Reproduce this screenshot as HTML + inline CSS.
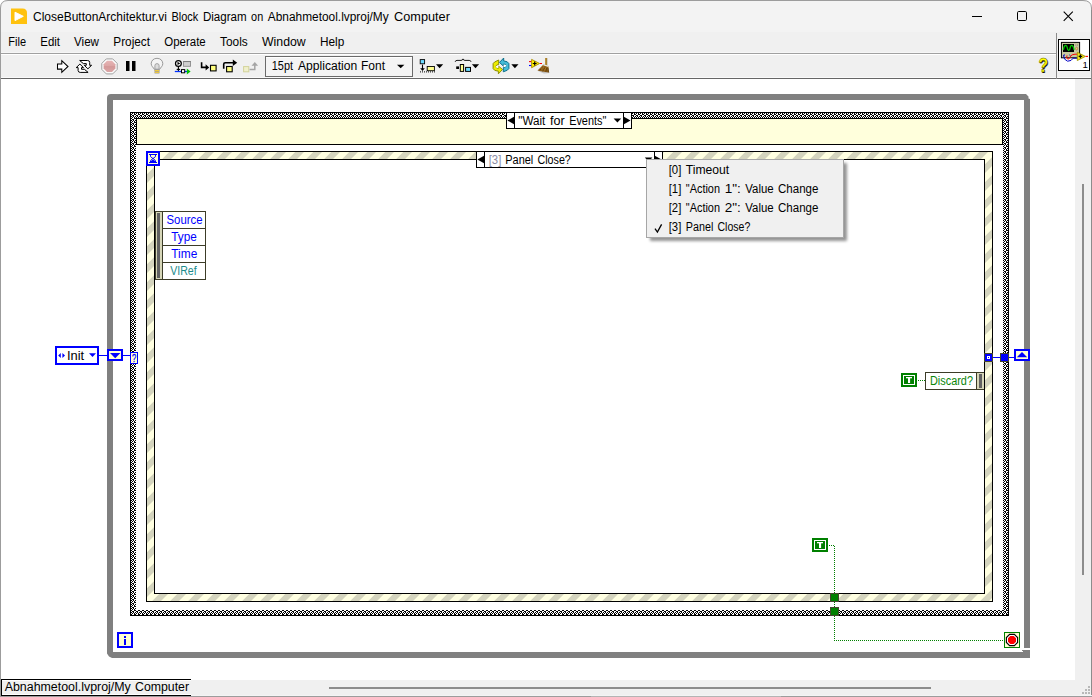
<!DOCTYPE html>
<html lang="en"><head><meta charset="utf-8"><title>CloseButtonArchitektur.vi Block Diagram</title>
<style>
html,body{margin:0;padding:0;background:#fff;}
body{width:1092px;height:697px;overflow:hidden;position:relative;}
svg{position:absolute;left:0;top:0;display:block;font-family:"Liberation Sans", "DejaVu Sans", sans-serif;}
svg text{white-space:pre;}
</style></head>
<body>
<svg width="1092" height="697" viewBox="0 0 1092 697">
<defs>
<pattern id="chk" width="4" height="4" patternUnits="userSpaceOnUse"><rect width="4" height="4" fill="#000"/><rect x="0" y="0" width="1" height="1" fill="#fff"/><rect x="2" y="0" width="1" height="1" fill="#fff"/><rect x="1" y="1" width="1" height="1" fill="#fff"/><rect x="3" y="1" width="1" height="1" fill="#fff"/><rect x="0" y="2" width="1" height="1" fill="#fff"/><rect x="1" y="2" width="1" height="1" fill="#fff"/><rect x="2" y="3" width="1" height="1" fill="#fff"/><rect x="3" y="3" width="1" height="1" fill="#fff"/></pattern>
<linearGradient id="abortg" x1="0" y1="0" x2="0" y2="1">
<stop offset="0" stop-color="#e6b4b4"/><stop offset="0.5" stop-color="#dca4a4"/><stop offset="0.51" stop-color="#d49898"/><stop offset="1" stop-color="#dba6a6"/>
</linearGradient>
<filter id="sh" x="-10%" y="-10%" width="130%" height="130%"><feGaussianBlur stdDeviation="1.6"/></filter>
</defs>
<rect x="0" y="0" width="1092" height="697" fill="#fff" />
<path d="M0 33 V8 Q0 0 8 0 H1083 Q1091 0 1091 8 V33 Z" fill="#f3f3f3"/>
<rect x="0" y="32" width="1092" height="47" fill="#f0f0f0" />
<rect x="0" y="52" width="1056" height="1" fill="#f6f6f6" />
<rect x="0" y="53" width="1056" height="1" fill="#a0a0a0" />
<rect x="0" y="54" width="1056" height="1" fill="#ffffff" />
<rect x="0" y="77" width="1092" height="1" fill="#fafafa" />
<rect x="0" y="78" width="1092" height="1" fill="#666666" />
<rect x="1056" y="33" width="1" height="46" fill="#8a8a8a" />
<rect x="1075" y="79" width="16" height="617" fill="#f0f0f0" />
<rect x="0" y="680" width="1092" height="16" fill="#f0f0f0" />
<rect x="1082" y="184" width="2" height="391" fill="#8c8c8c" />
<rect x="329" y="687" width="602" height="2" fill="#8c8c8c" />
<path d="M0.5 697 V8 Q0.5 0.5 8 0.5 H1083 Q1091.5 0.5 1091.5 8 V697" fill="none" stroke="#9c9c9c" stroke-width="1"/>
<rect x="1091" y="10" width="1" height="687" fill="#8c8c8c" />
<rect x="1088" y="686" width="2" height="2" fill="#b8b8b8" />
<rect x="1085" y="689" width="2" height="2" fill="#b8b8b8" />
<rect x="1088" y="689" width="2" height="2" fill="#b8b8b8" />
<rect x="1082" y="692" width="2" height="2" fill="#b8b8b8" />
<rect x="1085" y="692" width="2" height="2" fill="#b8b8b8" />
<rect x="1088" y="692" width="2" height="2" fill="#b8b8b8" />
<rect x="191" y="695" width="901" height="1" fill="#f4f4f4" />
<rect x="0" y="696" width="1092" height="1" fill="#9c9c9c" />
<rect x="591" y="696" width="190" height="1" fill="#b4b4b4" />
<path d="M11 8.5 H22.5 Q27 8.5 27 13 V24 H11 Z" fill="#ffc20e"/>
<path d="M15 12.2 L23.3 16.3 L15 20.6 Z" fill="#fff" stroke="#fff" stroke-width="1" stroke-linejoin="round"/>
<text y="21" font-size="12" fill="#000" ><tspan x="33" textLength="134" lengthAdjust="spacingAndGlyphs">CloseButtonArchitektur.vi</tspan> <tspan x="171.4" textLength="26.8" lengthAdjust="spacingAndGlyphs">Block</tspan> <tspan x="202.9" textLength="43.7" lengthAdjust="spacingAndGlyphs">Diagram</tspan> <tspan x="251.1" textLength="12.1" lengthAdjust="spacingAndGlyphs">on</tspan> <tspan x="267.8" textLength="120.9" lengthAdjust="spacingAndGlyphs">Abnahmetool.lvproj/My</tspan> <tspan x="394.1" textLength="55.8" lengthAdjust="spacingAndGlyphs">Computer</tspan></text>
<g shape-rendering="crispEdges" fill="none" stroke="#000" stroke-width="1">
<path d="M972 16.5 H982"/>
</g>
<rect x="1017.5" y="11.5" width="9" height="9" rx="1.2" fill="none" stroke="#000" stroke-width="1"/>
<path d="M1063.7 11.7 L1072.8 20.8 M1072.8 11.7 L1063.7 20.8" fill="none" stroke="#000" stroke-width="1.1"/>
<text x="8.3" y="46" font-size="12" fill="#000" text-anchor="start" textLength="17.7" lengthAdjust="spacingAndGlyphs" >File</text>
<text x="40.3" y="46" font-size="12" fill="#000" text-anchor="start" textLength="19.7" lengthAdjust="spacingAndGlyphs" >Edit</text>
<text x="74" y="46" font-size="12" fill="#000" text-anchor="start" textLength="25" lengthAdjust="spacingAndGlyphs" >View</text>
<text x="113.3" y="46" font-size="12" fill="#000" text-anchor="start" textLength="36.7" lengthAdjust="spacingAndGlyphs" >Project</text>
<text x="164.3" y="46" font-size="12" fill="#000" text-anchor="start" textLength="41.4" lengthAdjust="spacingAndGlyphs" >Operate</text>
<text x="220" y="46" font-size="12" fill="#000" text-anchor="start" textLength="27.7" lengthAdjust="spacingAndGlyphs" >Tools</text>
<text x="262" y="46" font-size="12" fill="#000" text-anchor="start" textLength="43.7" lengthAdjust="spacingAndGlyphs" >Window</text>
<text x="320" y="46" font-size="12" fill="#000" text-anchor="start" textLength="24.3" lengthAdjust="spacingAndGlyphs" >Help</text>
<g id="toolbar">
<!-- run arrow -->
<path d="M57.5 63.9 H61.8 V60.6 L68 66.5 L61.8 72.4 V69.1 H57.5 Z" fill="#fff" stroke="#000" stroke-width="1.05" stroke-linejoin="miter"/>
<!-- run continuously -->
<g fill="#fff" stroke="#000" stroke-width="1" stroke-linejoin="miter">
<path d="M79.7 60.5 H87.6 Q89.7 60.6 89.7 62.4 V65.3 H91.6 L87.9 68.8 L84.3 65.3 H86.3 V63.6 H83.4 Z"/>
<path d="M88.1 72.4 H80.2 Q78.1 72.3 78.1 70.5 V67.6 H76.2 L79.9 64.1 L83.5 67.6 H81.5 V69.3 H84.4 Z"/>
</g>
<!-- abort -->
<path d="M106.3 58.9 H112.7 L117.2 63.4 V69.4 L112.7 73.9 H106.3 L101.8 69.4 V63.4 Z" fill="#fbfbfb" stroke="#969696" stroke-width="0.9"/>
<path d="M107 60.8 H112 L115.4 64.2 V68.6 L112 72 H107 L103.6 68.6 V64.2 Z" fill="url(#abortg)"/>
<!-- pause -->
<rect x="126" y="61" width="3.5" height="10" fill="#000"/>
<rect x="132" y="61" width="3.5" height="10" fill="#000"/>
<!-- bulb -->
<g>
<path d="M157 58.3 C153.3 58.3 151.2 60.9 151.2 63.7 C151.2 66.2 153.4 67.4 154.4 69.4 H159.6 C160.6 67.4 162.8 66.2 162.8 63.7 C162.8 60.9 160.7 58.3 157 58.3 Z" fill="#f4f4f4" stroke="#8e8e8e" stroke-width="0.9"/>
<path d="M154.9 69.2 V65.6 Q154.9 63.6 157 63.6 Q159.1 63.6 159.1 65.6 V69.2 Z" fill="#dcdcdc" stroke="#9c9c9c" stroke-width="0.9"/>
<rect x="154.5" y="69.5" width="5" height="4.1" rx="0.7" fill="#9a9a9a"/>
<rect x="154.8" y="70" width="4.4" height="1.2" fill="#f2ca3c"/>
<rect x="154.8" y="71.8" width="4.4" height="1.1" fill="#f2ca3c"/>
</g>
<!-- retain wire values -->
<g>
<circle cx="178.4" cy="63.4" r="2.9" fill="#fff" stroke="#000" stroke-width="1.25"/>
<path d="M177.5 61.7 L180.2 63.4 L177.5 65.1 Z" fill="#000"/>
<rect x="183.5" y="61.6" width="7" height="4.7" fill="#d0d0d0" stroke="#8c8c8c" stroke-width="0.9"/>
<path d="M183.2 61.5 H190.8" stroke="#7c7c7c" stroke-width="0.9"/>
<path d="M178.4 66.4 V71" stroke="#000" stroke-width="1.1"/>
<path d="M176.7 69.4 H180.1" stroke="#000" stroke-width="1.1"/>
<path d="M174.8 71.5 H187" stroke="#0030ff" stroke-width="1.3"/>
<rect x="181.5" y="69.6" width="3.2" height="3.2" fill="#fff" stroke="#000" stroke-width="1"/>
<path d="M186.8 68.6 L190.6 71.5 L186.8 74.4 Z" fill="#00c000"/>
</g>
<!-- step into -->
<g>
<path d="M201.6 62.2 V67.4 H207" fill="none" stroke="#000" stroke-width="1.6"/>
<path d="M205.6 64.3 L209.2 67.4 L205.6 70.6 Z" fill="#000"/>
<rect x="210.5" y="65.3" width="5.6" height="5.6" fill="#ffff80" stroke="#000" stroke-width="1.1"/>
</g>
<!-- step over -->
<g>
<path d="M223.7 68.8 V64.3 Q223.7 62.8 225.3 62.8 H233.5" fill="none" stroke="#000" stroke-width="1.6"/>
<path d="M232.8 59.6 L237.2 62.8 L232.8 66 Z" fill="#000"/>
<rect x="226.6" y="66.5" width="5.6" height="5.3" fill="#ffff80" stroke="#000" stroke-width="1.1"/>
</g>
<!-- step out (disabled) -->
<g>
<rect x="243.6" y="66.6" width="5.2" height="5.2" fill="#f0f0cc" stroke="#d2d29a" stroke-width="1"/>
<path d="M249.6 69.4 H254.8 V65" fill="none" stroke="#a4a4a4" stroke-width="1.5"/>
<path d="M251.5 65.8 L254.8 62 L258.1 65.8 Z" fill="#a4a4a4"/>
</g>
<!-- font ring -->
<rect x="265.5" y="56.5" width="147" height="20" fill="#f4f4f4" stroke="#6a6a6a" stroke-width="1"/>
<rect x="266" y="57" width="146" height="1" fill="#fff"/>
<text y="70.3" font-size="12" fill="#000" ><tspan x="271.8" textLength="21.2" lengthAdjust="spacingAndGlyphs">15pt</tspan> <tspan x="298" textLength="59.3" lengthAdjust="spacingAndGlyphs">Application</tspan> <tspan x="361" textLength="24" lengthAdjust="spacingAndGlyphs">Font</tspan></text>
<path d="M397 64.8 H404.4 L400.7 68.3 Z" fill="#000"/>
<!-- align objects -->
<g>
<rect x="420.2" y="59.6" width="4.4" height="4.2" fill="#6edcff" stroke="#000" stroke-width="0.9"/>
<path d="M422.5 64.6 V70" stroke="#000" stroke-width="1.1"/>
<path d="M420.2 68.3 L422.5 71 L424.8 68.3 Z" fill="#000"/>
<rect x="427.2" y="66.5" width="7.2" height="4.2" fill="#ffff90" stroke="#000" stroke-width="0.9"/>
<path d="M420 71.9 H435" stroke="#000" stroke-width="1" stroke-dasharray="1 1"/>
<path d="M436 64.3 H443.2 L439.6 68.3 Z" fill="#000"/>
</g>
<!-- distribute objects -->
<g>
<path d="M455.2 61.8 Q455.4 60.4 457 60.4 H461 Q462.7 60.4 463 58.9 Q463.3 60.4 465 60.4 H469.2 Q470.8 60.4 471 61.8" fill="none" stroke="#000" stroke-width="0.9"/>
<rect x="456.2" y="66.4" width="2.8" height="2.6" fill="#000"/>
<rect x="460.3" y="64.5" width="3.3" height="6.9" fill="#ffff90" stroke="#000" stroke-width="1"/>
<rect x="465.6" y="67.4" width="4.9" height="4" fill="#6edcff" stroke="#000" stroke-width="1"/>
<path d="M471.9 64.3 H479.1 L475.5 68.3 Z" fill="#000"/>
</g>
<!-- reorder -->
<g stroke-linejoin="round">
<path d="M498.7 60 L494.6 62 L493.1 63.6 V68.6 L494.8 70.4 L498.4 71.2 V73.8 L502.5 69.5 L498.4 66 V68.3 L496.6 67.8 L495.9 66.6 L496.6 65.2 L498.7 64.4 Z" fill="#ecec00" stroke="#8e8e00" stroke-width="1"/>
<path d="M498.4 65.4 L496.4 66 L495.6 66.8 L496.6 67.8 L498.4 68 Z" fill="#fff"/>
<path d="M503.3 71.8 L507.2 70.3 L508.9 68.6 V63.6 L507.2 61.8 L503.7 60.9 V58 L499.5 62.4 L503.7 66.4 V64 L505.4 64.4 L506.2 65.6 L505.4 67 L503.3 67.6 Z" fill="#44bcd8" stroke="#0c6e8a" stroke-width="1"/>
<path d="M503.6 64.4 L505.6 65 L506.6 65.8 L505.4 66.8 L503.6 67.2 Z" fill="#fff"/>
<path d="M511.3 64.3 H518.5 L514.9 68.3 Z" fill="#000" stroke="none"/>
</g>
<!-- clean up diagram -->
<g>
<path d="M537.5 70.8 L543 66 L548 69 L549.6 73 L544 73.6 Z" fill="#9a9a9a" opacity="0.55"/>
<path d="M529 61.6 H531.6" stroke="#ff0000" stroke-width="1.1"/>
<path d="M529 65.5 H531.6" stroke="#0000ff" stroke-width="1.1"/>
<path d="M531.6 59.4 L539.6 63.5 L531.6 67.7 Z" fill="#fff000" stroke="#a88a00" stroke-width="0.9" stroke-linejoin="round"/>
<path d="M532.8 63.5 H536.6 M534.7 61.6 V65.4" stroke="#000" stroke-width="1.2"/>
<path d="M540 63.5 H542" stroke="#ff0000" stroke-width="1.1"/>
<path d="M546 58 V65" stroke="#b08420" stroke-width="1.7"/>
<path d="M546.9 58 V65" stroke="#7a5410" stroke-width="0.5"/>
<path d="M543.4 64.4 L548.4 66 L549 72.6 L543.6 71.8 L537.6 70.6 Z" fill="#8e5e18"/>
<path d="M543.2 64.8 L548.4 66.4" stroke="#e8e8e0" stroke-width="1.1"/>
<path d="M539.6 70.4 L543 67.2 M542.6 71.4 L545 67.6 M545.8 72 L546.8 67.8 M548.4 72.2 L548 68" stroke="#4e3208" stroke-width="0.6"/>
<path d="M541 69.2 L544 66.6 M544.4 70.4 L546 67.4" stroke="#c89038" stroke-width="0.5"/>
</g>
<!-- help -->
<g>
<text x="1039.6" y="73.2" font-size="19.6" font-weight="bold" fill="#8e8e8e" textLength="9.6" lengthAdjust="spacingAndGlyphs">?</text>
<text x="1039" y="72.6" font-size="19.6" font-weight="bold" fill="#000" textLength="9.6" lengthAdjust="spacingAndGlyphs">?</text>
<text x="1038.4" y="72.1" font-size="19.6" font-weight="bold" fill="#ffff00" stroke="#5a5a00" stroke-width="0.5" textLength="9.6" lengthAdjust="spacingAndGlyphs">?</text>
</g>
<!-- VI icon -->
<g>
<rect x="1058.5" y="39.5" width="31" height="31" fill="#fff" stroke="#000" stroke-width="1"/>
<rect x="1061.4" y="42.4" width="18.2" height="15.4" fill="#c8c8a0" stroke="#000" stroke-width="1"/>
<rect x="1063" y="44" width="11" height="8" fill="#000"/>
<path d="M1063.3 49.8 C1064.3 44.3 1066.6 44.3 1067.3 47.8 C1067.9 51.4 1069.5 51.4 1070.1 47.8 C1070.8 44.3 1073.1 44.3 1074.1 49.8" fill="none" stroke="#00c800" stroke-width="1.3"/>
<ellipse cx="1076.6" cy="48.6" rx="1" ry="1.5" fill="#ffc878" stroke="#786432" stroke-width="0.5"/>
<path d="M1075.8 44 V46 M1077.6 44 V46" stroke="#8c8c6e" stroke-width="0.6"/>
<path d="M1063.4 55.2 Q1063.6 60 1067.6 61.2 Q1071.6 61.2 1073.2 58.2 H1079" fill="none" stroke="#0000c8" stroke-width="1"/>
<path d="M1067 55.4 Q1065.6 58.6 1068 59.2 Q1069.8 58.8 1070.6 56.2 Q1071.6 54.4 1075 54.2 H1078" fill="none" stroke="#ff0000" stroke-width="1"/>
<path d="M1064.3 54 V56 M1069.5 54.5 L1070.3 56" stroke="#0000c8" stroke-width="0.7"/>
<path d="M1077.3 52.3 L1085.4 56.4 L1077.3 60.5 Z" fill="#f6ec1e" stroke="#a09400" stroke-width="0.9" stroke-linejoin="round"/>
<path d="M1078.6 56.4 H1082.2 M1080.4 54.6 V58.2" stroke="#000" stroke-width="1.3"/>
<path d="M1085.6 56.4 H1088" stroke="#ff0000" stroke-width="1.1"/>
<text x="1082.4" y="67.8" font-size="9.6" fill="#000">1</text>
</g>
</g>

<g id="diagram">
<!-- while loop -->
<g fill="#808080">
<path d="M107 98 Q107 94 111 94 H1026 L1028.5 96.4 V98.6 L1030 99 V648 H1024 V100 H113 V652 H1030 V658 H112 L109 656.6 L107 653.6 Z"/>
<rect x="1023" y="650" width="7" height="3"/>
<rect x="1022" y="650" width="1" height="1"/>
</g>

<!-- case structure -->
<rect x="130" y="112" width="879" height="504" fill="#000"/>
<rect x="131" y="113" width="877" height="502" fill="url(#chk)" shape-rendering="crispEdges"/>
<rect x="136" y="118" width="867" height="492" fill="#fff"/>
<rect x="136" y="118" width="867" height="27" fill="#000"/>
<rect x="137" y="119" width="865" height="25" fill="#ffffdc"/>

<!-- event structure -->
<rect x="146" y="151" width="847" height="451" fill="#000"/>
<rect x="147" y="152" width="845" height="449" fill="#000"/>
<clipPath id="evframe"><path clip-rule="evenodd" d="M147 152 H992 V601 H147 Z M154 159 V594 H985 V159 Z"/></clipPath><rect x="147" y="152" width="845" height="449" fill="#ffffe1" clip-path="url(#evframe)"/><path clip-path="url(#evframe)" fill="#d4d4be" d="M152.2 151 L161.0 151 L-290.0 602 L-298.8 602 Z M170.2 151 L179.0 151 L-272.0 602 L-280.8 602 Z M188.2 151 L197.0 151 L-254.0 602 L-262.8 602 Z M206.2 151 L215.0 151 L-236.0 602 L-244.8 602 Z M224.2 151 L233.0 151 L-218.0 602 L-226.8 602 Z M242.2 151 L251.0 151 L-200.0 602 L-208.8 602 Z M260.2 151 L269.0 151 L-182.0 602 L-190.8 602 Z M278.2 151 L287.0 151 L-164.0 602 L-172.8 602 Z M296.2 151 L305.0 151 L-146.0 602 L-154.8 602 Z M314.2 151 L323.0 151 L-128.0 602 L-136.8 602 Z M332.2 151 L341.0 151 L-110.0 602 L-118.8 602 Z M350.2 151 L359.0 151 L-92.0 602 L-100.8 602 Z M368.2 151 L377.0 151 L-74.0 602 L-82.8 602 Z M386.2 151 L395.0 151 L-56.0 602 L-64.8 602 Z M404.2 151 L413.0 151 L-38.0 602 L-46.8 602 Z M422.2 151 L431.0 151 L-20.0 602 L-28.8 602 Z M440.2 151 L449.0 151 L-2.0 602 L-10.8 602 Z M458.2 151 L467.0 151 L16.0 602 L7.2 602 Z M476.2 151 L485.0 151 L34.0 602 L25.2 602 Z M494.2 151 L503.0 151 L52.0 602 L43.2 602 Z M512.2 151 L521.0 151 L70.0 602 L61.2 602 Z M530.2 151 L539.0 151 L88.0 602 L79.2 602 Z M548.2 151 L557.0 151 L106.0 602 L97.2 602 Z M566.2 151 L575.0 151 L124.0 602 L115.2 602 Z M584.2 151 L593.0 151 L142.0 602 L133.2 602 Z M602.2 151 L611.0 151 L160.0 602 L151.2 602 Z M620.2 151 L629.0 151 L178.0 602 L169.2 602 Z M638.2 151 L647.0 151 L196.0 602 L187.2 602 Z M656.2 151 L665.0 151 L214.0 602 L205.2 602 Z M674.2 151 L683.0 151 L232.0 602 L223.2 602 Z M692.2 151 L701.0 151 L250.0 602 L241.2 602 Z M710.2 151 L719.0 151 L268.0 602 L259.2 602 Z M728.2 151 L737.0 151 L286.0 602 L277.2 602 Z M746.2 151 L755.0 151 L304.0 602 L295.2 602 Z M764.2 151 L773.0 151 L322.0 602 L313.2 602 Z M782.2 151 L791.0 151 L340.0 602 L331.2 602 Z M800.2 151 L809.0 151 L358.0 602 L349.2 602 Z M818.2 151 L827.0 151 L376.0 602 L367.2 602 Z M836.2 151 L845.0 151 L394.0 602 L385.2 602 Z M854.2 151 L863.0 151 L412.0 602 L403.2 602 Z M872.2 151 L881.0 151 L430.0 602 L421.2 602 Z M890.2 151 L899.0 151 L448.0 602 L439.2 602 Z M908.2 151 L917.0 151 L466.0 602 L457.2 602 Z M926.2 151 L935.0 151 L484.0 602 L475.2 602 Z M944.2 151 L953.0 151 L502.0 602 L493.2 602 Z M962.2 151 L971.0 151 L520.0 602 L511.2 602 Z M980.2 151 L989.0 151 L538.0 602 L529.2 602 Z M998.2 151 L1007.0 151 L556.0 602 L547.2 602 Z M1016.2 151 L1025.0 151 L574.0 602 L565.2 602 Z M1034.2 151 L1043.0 151 L592.0 602 L583.2 602 Z M1052.2 151 L1061.0 151 L610.0 602 L601.2 602 Z M1070.2 151 L1079.0 151 L628.0 602 L619.2 602 Z M1088.2 151 L1097.0 151 L646.0 602 L637.2 602 Z M1106.2 151 L1115.0 151 L664.0 602 L655.2 602 Z M1124.2 151 L1133.0 151 L682.0 602 L673.2 602 Z M1142.2 151 L1151.0 151 L700.0 602 L691.2 602 Z M1160.2 151 L1169.0 151 L718.0 602 L709.2 602 Z M1178.2 151 L1187.0 151 L736.0 602 L727.2 602 Z M1196.2 151 L1205.0 151 L754.0 602 L745.2 602 Z M1214.2 151 L1223.0 151 L772.0 602 L763.2 602 Z M1232.2 151 L1241.0 151 L790.0 602 L781.2 602 Z M1250.2 151 L1259.0 151 L808.0 602 L799.2 602 Z M1268.2 151 L1277.0 151 L826.0 602 L817.2 602 Z M1286.2 151 L1295.0 151 L844.0 602 L835.2 602 Z M1304.2 151 L1313.0 151 L862.0 602 L853.2 602 Z M1322.2 151 L1331.0 151 L880.0 602 L871.2 602 Z M1340.2 151 L1349.0 151 L898.0 602 L889.2 602 Z M1358.2 151 L1367.0 151 L916.0 602 L907.2 602 Z M1376.2 151 L1385.0 151 L934.0 602 L925.2 602 Z M1394.2 151 L1403.0 151 L952.0 602 L943.2 602 Z M1412.2 151 L1421.0 151 L970.0 602 L961.2 602 Z M1430.2 151 L1439.0 151 L988.0 602 L979.2 602 Z"/>
<rect x="155" y="160" width="829" height="433" fill="#fff"/>

<!-- timeout terminal -->
<rect x="146" y="151" width="14" height="15" fill="#0000ff"/>
<rect x="148" y="153" width="10" height="11" fill="#ffffd2"/>
<g fill="none" stroke="#0000ff" stroke-width="1">
<path d="M149 154.5 H157 M149 162.5 H157"/>
<path d="M150.5 155 V156.6 L153 158.6 L155.5 156.6 V155"/>
<path d="M150.5 162 V160.6 L153 158.4 L155.5 160.6 V162"/>
</g>
<path d="M151 162 V161 L153 159.6 L155 161 V162 Z" fill="#0000ff"/>

<!-- case selector label -->
<rect x="506" y="112" width="126" height="17" fill="#000"/>
<rect x="507" y="113" width="124" height="15" fill="#fff"/>
<rect x="514" y="113" width="1" height="15" fill="#000"/>
<rect x="623" y="113" width="1" height="15" fill="#000"/>
<path d="M507.4 120.5 L514 116.7 V124.3 Z" fill="#000"/>
<path d="M630.5 120.5 L623.9 116.7 V124.3 Z" fill="#000"/>
<path d="M613.6 118.4 H621.2 L617.4 122.4 Z" fill="#000"/>
<text y="124.7" font-size="12" fill="#000" ><tspan x="518.3" textLength="27.0" lengthAdjust="spacingAndGlyphs">"Wait</tspan> <tspan x="550" textLength="14.7" lengthAdjust="spacingAndGlyphs">for</tspan> <tspan x="569.2" textLength="37.1" lengthAdjust="spacingAndGlyphs">Events"</tspan></text>

<!-- event selector label -->
<rect x="476" y="151" width="187" height="17" fill="#000"/>
<rect x="477" y="152" width="185" height="15" fill="#fff"/>
<rect x="484" y="152" width="1" height="15" fill="#000"/>
<rect x="654" y="152" width="1" height="15" fill="#000"/>
<path d="M477.4 159.5 L484 155.7 V163.3 Z" fill="#000"/>
<path d="M661.5 159.5 L654.9 155.7 V163.3 Z" fill="#000"/>
<path d="M644.8 157.4 H652.4 L648.6 161.4 Z" fill="#000"/>
<text y="163.7" font-size="12" fill="#000" ><tspan x="488.7" textLength="12.6" lengthAdjust="spacingAndGlyphs" fill="#8c8ca4">[3]</tspan> <tspan x="505.3" textLength="28.0" lengthAdjust="spacingAndGlyphs">Panel</tspan> <tspan x="537.5" textLength="33.3" lengthAdjust="spacingAndGlyphs">Close?</tspan></text>

<!-- event data node -->
<rect x="155" y="211" width="51" height="69" fill="#3c3c28"/>
<rect x="156" y="212" width="6" height="67" fill="#d6d6b8"/>
<rect x="157" y="213" width="3" height="65" fill="#626262"/>
<rect x="163" y="212" width="42" height="16" fill="#fff"/>
<rect x="163" y="229" width="42" height="16" fill="#fff"/>
<rect x="163" y="246" width="42" height="16" fill="#fff"/>
<rect x="163" y="263" width="42" height="16" fill="#fff"/>
<text x="166.5" y="224.2" font-size="12" fill="#0000ff" textLength="36" lengthAdjust="spacingAndGlyphs">Source</text>
<text x="171.3" y="241.2" font-size="12" fill="#0000ff" textLength="25.5" lengthAdjust="spacingAndGlyphs">Type</text>
<text x="171.3" y="258.2" font-size="12" fill="#0000ff" textLength="26" lengthAdjust="spacingAndGlyphs">Time</text>
<text x="170.2" y="275.2" font-size="12" fill="#1c8c8c" textLength="26.5" lengthAdjust="spacingAndGlyphs">VIRef</text>

<!-- Init enum constant -->
<rect x="55" y="346" width="44" height="19" fill="#0000ff"/>
<rect x="57" y="348" width="40" height="15" fill="#fff"/>
<path d="M58.2 355.5 L60.8 353 V358 Z M65 355.5 L62.4 353 V358 Z" fill="#0000ff"/>
<text x="67" y="359.7" font-size="12" fill="#000" textLength="17.2" lengthAdjust="spacingAndGlyphs">Init</text>
<path d="M89 353.2 H96 L92.5 357 Z" fill="#0000ff"/>
<!-- wires left -->
<rect x="99" y="355" width="8" height="1" fill="#0000ff"/>
<rect x="123" y="355" width="7" height="1" fill="#0000ff"/>
<!-- left shift register -->
<rect x="107" y="349" width="16" height="12" fill="#0000ff"/>
<rect x="109" y="351" width="12" height="8" fill="#ffffd2"/>
<path d="M110 353 H120.4 L115.2 358.3 Z" fill="#0000ff"/>
<!-- case selector terminal -->
<rect x="130" y="352" width="8" height="12" fill="#0000ff"/>
<rect x="131" y="353" width="6" height="10" fill="#ffffd2"/>
<text x="131.9" y="362.1" font-size="10.6" fill="#0000ff" stroke="#0000ff" stroke-width="0.3" textLength="4.2" lengthAdjust="spacingAndGlyphs">?</text>

<!-- right side: tunnels + shift register -->
<rect x="993" y="357" width="7" height="1" fill="#0000ff"/>
<rect x="1009" y="357" width="5" height="1" fill="#0000ff"/>
<rect x="984" y="353" width="9" height="9" fill="#46462e"/>
<rect x="985" y="354" width="7" height="7" fill="#0000ff"/>
<rect x="987" y="356" width="3" height="3" fill="#fff"/>
<rect x="988" y="357" width="1" height="1" fill="#0000ff"/>
<rect x="1000" y="353" width="9" height="9" fill="#46462e"/>
<rect x="1001" y="354" width="7" height="7" fill="#0000ff"/>
<rect x="1014" y="349" width="16" height="12" fill="#0000ff"/>
<rect x="1016" y="351" width="12" height="8" fill="#ffffd2"/>
<path d="M1016.8 357.2 H1027.2 L1022 351.9 Z" fill="#0000ff"/>

<!-- True constant + Discard? -->
<rect x="901" y="373" width="16" height="14" fill="#008000"/>
<rect x="903" y="375" width="12" height="10" fill="#fff"/>
<rect x="904" y="376" width="10" height="8" fill="#008000"/>
<rect x="906" y="377" width="6" height="1.3" fill="#fff"/><rect x="908" y="377" width="2.1" height="6" fill="#fff"/>
<path d="M918 380.5 H925" stroke="#008000" stroke-width="1" stroke-dasharray="1 1" shape-rendering="crispEdges"/>
<rect x="925" y="372" width="59" height="18" fill="#3c3c28"/>
<rect x="926" y="373" width="50" height="16" fill="#fff"/>
<rect x="977" y="373" width="7" height="16" fill="#d6d6b8"/>
<rect x="979" y="374" width="3" height="14" fill="#626262"/>
<text x="930" y="384.8" font-size="12" fill="#0a860a" textLength="43" lengthAdjust="spacingAndGlyphs">Discard?</text>

<!-- bottom True constant and wire -->
<rect x="812" y="538" width="16" height="14" fill="#008000"/>
<rect x="814" y="540" width="12" height="10" fill="#fff"/>
<rect x="815" y="541" width="10" height="8" fill="#008000"/>
<rect x="817" y="542" width="6" height="1.3" fill="#fff"/><rect x="819" y="542" width="2.1" height="6" fill="#fff"/>
<g shape-rendering="crispEdges" stroke="#008000" stroke-width="1" fill="none" stroke-dasharray="1 1">
<path d="M829 545.5 H834"/>
<path d="M834.5 546 V593"/>
<path d="M834.5 602 V607"/>
<path d="M834.5 616 V640"/>
<path d="M834 640.5 H1004"/>
</g>
<rect x="830" y="593" width="9" height="9" fill="#46462e"/>
<rect x="831" y="594" width="7" height="7" fill="#008000"/>
<rect x="830" y="607" width="9" height="9" fill="#46462e"/>
<rect x="831" y="608" width="7" height="7" fill="#008000"/>

<!-- loop condition terminal -->
<rect x="1004" y="632" width="16" height="16" fill="#008000"/>
<rect x="1005" y="633" width="14" height="14" fill="#ffffd2"/>
<path d="M1009.6 634.4 H1014.4 L1017.6 637.6 V642.4 L1014.4 645.6 H1009.6 L1006.4 642.4 V637.6 Z" fill="#fff" stroke="#000" stroke-width="1.15"/>
<path d="M1010.3 636 H1013.7 L1016 638.3 V641.7 L1013.7 644 H1010.3 L1008 641.7 V638.3 Z" fill="#ff0000"/>

<!-- iteration terminal -->
<rect x="117" y="632" width="16" height="16" fill="#0000ff"/>
<rect x="119" y="634" width="12" height="12" fill="#ffffd2"/>
<rect x="124" y="636" width="2" height="2" fill="#0000ff"/>
<rect x="124" y="639" width="2" height="6" fill="#0000ff"/>

<!-- popup menu -->
<rect x="650" y="163" width="197" height="78" rx="1" fill="#000" opacity="0.42" filter="url(#sh)"/>
<rect x="646" y="159" width="198" height="79" fill="#a6a6a6"/>
<rect x="647" y="160" width="196" height="77" fill="#f0f0f0"/>
<text y="173.8" font-size="12" fill="#000" ><tspan x="668.7" textLength="12.6" lengthAdjust="spacingAndGlyphs">[0]</tspan> <tspan x="685.8" textLength="43.4" lengthAdjust="spacingAndGlyphs">Timeout</tspan></text>
<text y="192.8" font-size="12" fill="#000" ><tspan x="668.7" textLength="12.6" lengthAdjust="spacingAndGlyphs">[1]</tspan> <tspan x="685.8" textLength="34.2" lengthAdjust="spacingAndGlyphs">"Action</tspan> <tspan x="724.7" textLength="16.1" lengthAdjust="spacingAndGlyphs">1":</tspan> <tspan x="745.3" textLength="28.4" lengthAdjust="spacingAndGlyphs">Value</tspan> <tspan x="778" textLength="40.4" lengthAdjust="spacingAndGlyphs">Change</tspan></text>
<text y="211.8" font-size="12" fill="#000" ><tspan x="668.7" textLength="12.6" lengthAdjust="spacingAndGlyphs">[2]</tspan> <tspan x="685.8" textLength="34.2" lengthAdjust="spacingAndGlyphs">"Action</tspan> <tspan x="724.7" textLength="16.1" lengthAdjust="spacingAndGlyphs">2":</tspan> <tspan x="745.3" textLength="28.4" lengthAdjust="spacingAndGlyphs">Value</tspan> <tspan x="778" textLength="40.4" lengthAdjust="spacingAndGlyphs">Change</tspan></text>
<text y="230.8" font-size="12" fill="#000" ><tspan x="668.7" textLength="12.6" lengthAdjust="spacingAndGlyphs">[3]</tspan> <tspan x="685.8" textLength="27.5" lengthAdjust="spacingAndGlyphs">Panel</tspan> <tspan x="717.5" textLength="32.8" lengthAdjust="spacingAndGlyphs">Close?</tspan></text>
<path d="M655 228.6 L657.4 232 L661.6 224.4" fill="none" stroke="#000" stroke-width="1.3"/>

<!-- project label bottom-left -->
<rect x="1" y="679" width="190" height="17" fill="#000"/>
<rect x="2" y="680" width="189" height="15" fill="#fff"/>
<rect x="2" y="681" width="189" height="13" fill="#f0f0f0"/>
<text y="691" font-size="12" fill="#000" ><tspan x="4.7" textLength="126.1" lengthAdjust="spacingAndGlyphs">Abnahmetool.lvproj/My</tspan> <tspan x="135" textLength="54" lengthAdjust="spacingAndGlyphs">Computer</tspan></text>
</g>

</svg>
</body></html>
